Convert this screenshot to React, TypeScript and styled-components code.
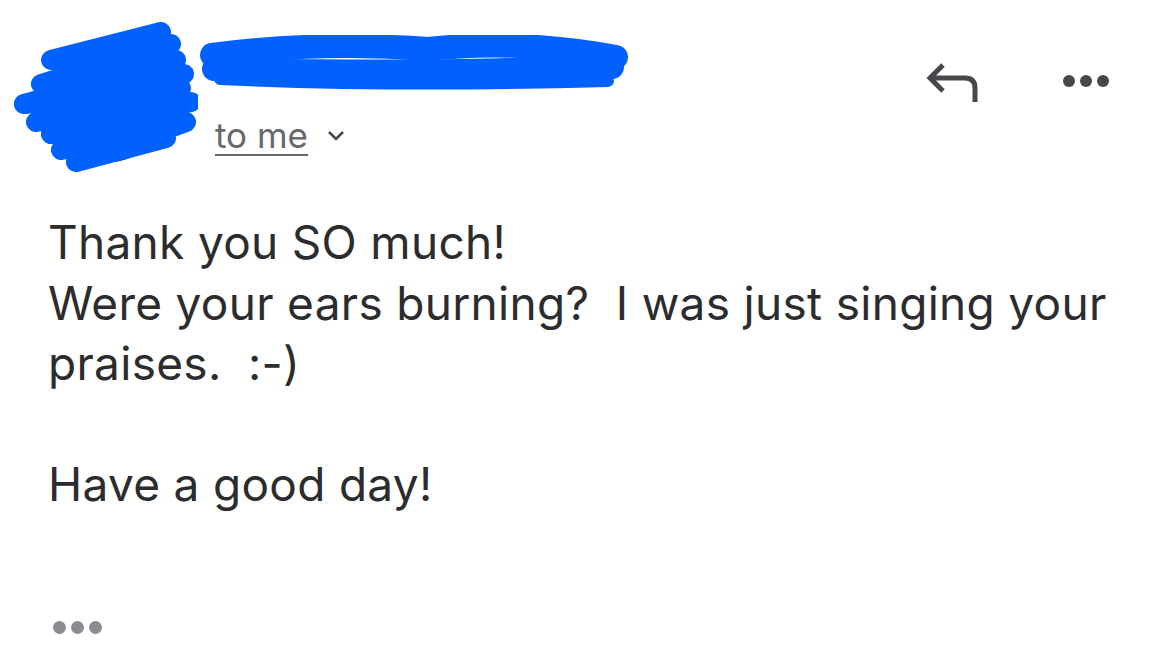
import styled, { createGlobalStyle } from 'styled-components'

const GlobalStyle = createGlobalStyle`
  html, body {
    margin: 0;
    padding: 0;
    background: #ffffff;
  }
  body {
    font-family: 'Inter', 'Liberation Sans', sans-serif;
  }
`

const Blue = '#0061fe'

const AvatarScribble = () => (
  <svg width="192" height="150" viewBox="0 0 192 150">
    <circle cx="103" cy="84" r="56" fill="#2a1414" />
    <path d="M60 120 Q90 140 130 120 L120 100 Z" fill="#b3262a" />
    <g stroke={Blue} strokeWidth="20" strokeLinecap="round" strokeLinejoin="round" fill="none">
      <path d="M45 38 L155 10 L60 45 L165 22 L35 62 L170 38 L18 82 L178 52" />
      <path d="M18 82 L120 70 L30 100 L175 66 L45 112 L185 80" />
      <path d="M45 112 L170 92 L55 128 L180 100 L70 140 L160 116" />
    </g>
  </svg>
)

const NameScribble = () => (
  <svg width="430" height="60" viewBox="0 0 430 60">
    <g stroke={Blue} strokeLinecap="round" fill="none">
      <path d="M14 20 Q120 6 230 14 Q320 4 418 22" strokeWidth="24" />
      <path d="M16 34 Q200 40 414 32" strokeWidth="24" />
      <path d="M22 44 Q200 52 410 46" strokeWidth="12" />
    </g>
  </svg>
)

const ReplyIcon = () => (
  <svg width="56" height="46" viewBox="0 0 56 46">
    <path
      d="M18 7 L5 20 L18 33 M5 20 H40 Q50 20 50 30 V44"
      stroke="#48484c"
      strokeWidth="5"
      fill="none"
    />
  </svg>
)

const Chevron = () => (
  <svg width="20" height="14" viewBox="0 0 20 14">
    <path d="M3 4 L10 11 L17 4" stroke="#48484c" strokeWidth="2.6" fill="none" />
  </svg>
)

export default function App() {
  return (
    <>
      <GlobalStyle />
      <Page>
        <Header>
          <AvatarBox>
            <AvatarScribble />
          </AvatarBox>
          <SenderColumn>
            <NameBox>
              <NameScribble />
            </NameBox>
            <Recipient>
              <RecipientText>to me</RecipientText>
              <Chevron />
            </Recipient>
          </SenderColumn>
          <Actions>
            <ReplyIcon />
            <Dots size={12} color="#48484c" />
          </Actions>
        </Header>
        <Body>
          <Line>Thank you SO much!</Line>
          <Line>Were your ears burning?&nbsp; I was just singing your</Line>
          <Line>praises.&nbsp; :-)</Line>
          <Line>&nbsp;</Line>
          <Line>Have a good day!</Line>
        </Body>
        <Footer>
          <Dots size={13} color="#8b8b92" />
        </Footer>
      </Page>
    </>
  )
}

const Dots = ({ size, color }: { size: number; color: string }) => (
  <DotRow>
    <Dot $size={size} $color={color} />
    <Dot $size={size} $color={color} />
    <Dot $size={size} $color={color} />
  </DotRow>
)

const Page = styled.div`
  width: 1169px;
  height: 658px;
  background: #ffffff;
  display: flex;
  flex-direction: column;
  overflow: hidden;
`

const Header = styled.div`
  display: flex;
  align-items: flex-start;
  padding: 22px 0 0 6px;
  height: 150px;
`

const AvatarBox = styled.div`
  width: 192px;
  height: 150px;
  flex-shrink: 0;
`

const SenderColumn = styled.div`
  display: flex;
  flex-direction: column;
  padding-top: 13px;
  flex: 1;
`

const NameBox = styled.div`
  height: 60px;
`

const Recipient = styled.div`
  display: flex;
  align-items: center;
  gap: 18px;
  margin-top: 20px;
  padding-left: 17px;
`

const RecipientText = styled.span`
  font-size: 35px;
  color: #68686c;
  text-decoration: underline;
  text-decoration-thickness: 2px;
  text-underline-offset: 6px;
  line-height: 40px;
`

const Actions = styled.div`
  display: flex;
  align-items: center;
  gap: 82px;
  padding-top: 36px;
  padding-right: 60px;
`

const DotRow = styled.div`
  display: flex;
  gap: 5px;
`

const Dot = styled.span<{ $size: number; $color: string }>`
  width: ${p => p.$size}px;
  height: ${p => p.$size}px;
  border-radius: 50%;
  background: ${p => p.$color};
`

const Body = styled.div`
  padding: 40px 0 0 48px;
  color: #2c2c2e;
  font-size: 46px;
  letter-spacing: 0.3px;
  line-height: 60.5px;
`

const Line = styled.div`
  white-space: pre;
`

const Footer = styled.div`
  padding: 106px 0 0 53px;
`
